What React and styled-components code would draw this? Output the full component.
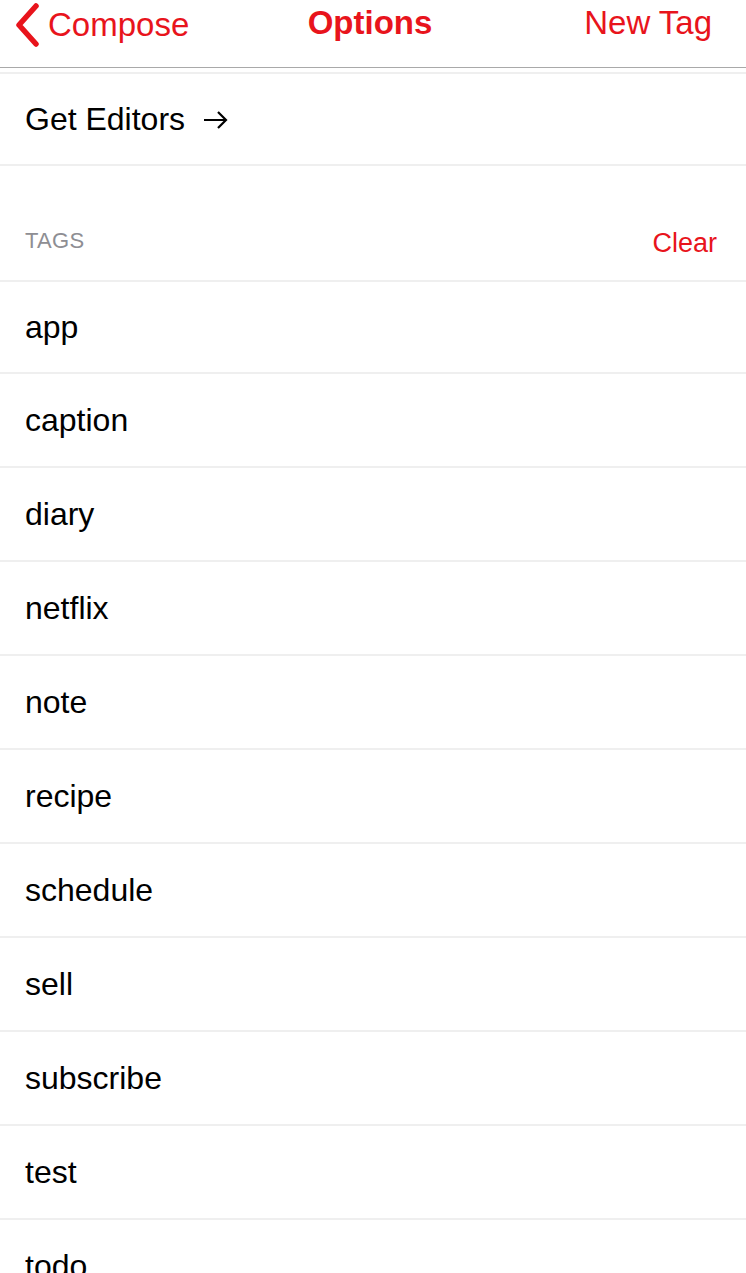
import React from 'react'
import styled, { createGlobalStyle } from 'styled-components'

const RED = '#e8141c'

const GlobalStyle = createGlobalStyle`
  html, body {
    margin: 0;
    padding: 0;
    background: #fff;
    height: 1273px;
    overflow: hidden;
  }
  body {
    font-family: "Liberation Sans", Arial, sans-serif;
    -webkit-font-smoothing: antialiased;
  }
`

const Page = styled.div`
  width: 746px;
  display: flex;
  flex-direction: column;
`

const NavBar = styled.div`
  height: 68px;
  box-sizing: border-box;
  border-bottom: 1px solid #a9a9a9;
  display: grid;
  grid-template-columns: 1fr auto 1fr;
  align-items: start;
  padding: 3px 20px 0 14px;
`

const BackButton = styled.div`
  display: flex;
  align-items: center;
  gap: 8px;
  color: ${RED};
  font-size: 33px;
  line-height: 40px;
  justify-self: start;
`

const NavTitle = styled.div`
  color: ${RED};
  font-size: 33px;
  font-weight: 700;
  line-height: 40px;
`

const NavAction = styled.div`
  color: ${RED};
  font-size: 33px;
  line-height: 40px;
  justify-self: end;
  margin-right: 14px;
`

const Spacer = styled.div`
  height: 4px;
  border-bottom: 2px solid #efefef;
`

const Row = styled.div`
  height: ${p => p.$h || 92}px;
  border-bottom: 2px solid #efefef;
  display: flex;
  align-items: center;
  padding: 0 25px;
  font-size: 32px;
  color: #000;
`

const LinkArrow = styled.svg`
  margin-left: 18px;
  margin-top: 2px;
`

const SectionHeader = styled.div`
  height: 116px;
  box-sizing: border-box;
  border-bottom: 2px solid #efefef;
  display: flex;
  justify-content: space-between;
  align-items: flex-end;
  padding: 0 29px 21px 25px;
`

const SectionTitle = styled.span`
  color: #8e8e93;
  font-size: 22px;
  letter-spacing: 0.3px;
  margin-bottom: 5px;
`

const ClearButton = styled.span`
  color: ${RED};
  font-size: 27px;
`

const tags = ['app', 'caption', 'diary', 'netflix', 'note', 'recipe', 'schedule', 'sell', 'subscribe', 'test', 'todo']

export default function App() {
  return (
    <Page>
      <GlobalStyle />
      <NavBar>
        <BackButton>
          <svg width="26" height="44" viewBox="0 0 26 44">
            <path d="M22 3 L5 22 L22 41" fill="none" stroke={RED} strokeWidth="5.5" strokeLinecap="round" strokeLinejoin="round" />
          </svg>
          Compose
        </BackButton>
        <NavTitle>Options</NavTitle>
        <NavAction>New Tag</NavAction>
      </NavBar>
      <Spacer />
      <Row $h={90}>
        Get Editors
        <LinkArrow width="26" height="20" viewBox="0 0 26 20">
          <path d="M1 10 H23 M15 2 L23 10 L15 18" fill="none" stroke="#000" strokeWidth="2.2" />
        </LinkArrow>
      </Row>
      <SectionHeader>
        <SectionTitle>TAGS</SectionTitle>
        <ClearButton>Clear</ClearButton>
      </SectionHeader>
      {tags.map((t, i) => (
        <Row key={t} $h={i === 0 ? 90 : 92}>{t}</Row>
      ))}
    </Page>
  )
}
